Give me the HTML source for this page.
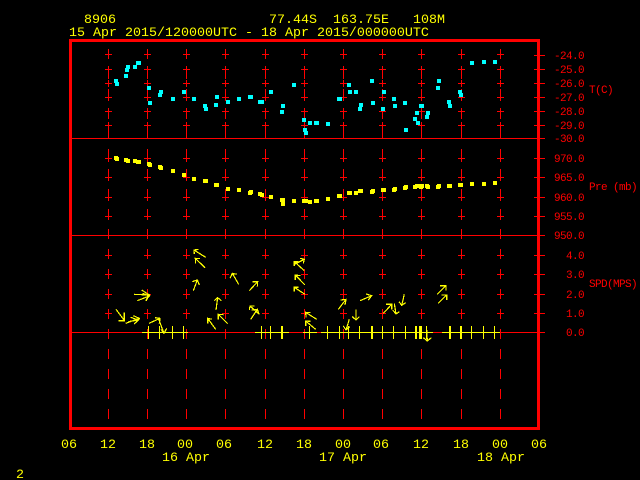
<!DOCTYPE html>
<html><head><meta charset="utf-8"><style>
html,body{margin:0;padding:0;background:#000;width:640px;height:480px;overflow:hidden}
svg{display:block}
text{font-family:"Liberation Mono",monospace;white-space:pre}
.y{fill:#ff0;font-size:13.33px}
.r{fill:#f00;font-size:11px;letter-spacing:-.6px}
</style></head><body>
<svg width="640" height="480" viewBox="0 0 640 480" xmlns="http://www.w3.org/2000/svg">
<rect width="640" height="480" fill="#000"/>
<defs>
<g id="c" fill="none" stroke="#f00" stroke-width="1" shape-rendering="crispEdges">
<path d="M.5 49V59M.5 69V79M.5 89V99M.5 109V119M.5 129V139M.5 149V159M.5 169V179M.5 189V199M.5 209V219M.5 229V239M.5 249V259M.5 269V279M.5 289V299M.5 309V319M.5 329V339M.5 349V359M.5 369V379M.5 389V399M.5 409V419"/>
<path d="M-3 54.5H4M-3 69.5H4M-3 83.5H4M-3 97.5H4M-3 111.5H4M-3 125.5H4M-3 158.5H4M-3 177.5H4M-3 197.5H4M-3 216.5H4M-3 255.5H4M-3 274.5H4M-3 294.5H4M-3 313.5H4"/>
<path d="M.5 51V58M.5 66V73M.5 80V87M.5 94V101M.5 108V115M.5 122V129M.5 155V162M.5 174V181M.5 194V201M.5 213V220M.5 252V259M.5 271V278M.5 291V298M.5 310V317"/>
</g>
</defs>
<use href="#c" x="108"/><use href="#c" x="147"/><use href="#c" x="186"/><use href="#c" x="225"/><use href="#c" x="265"/><use href="#c" x="304"/><use href="#c" x="343"/><use href="#c" x="382"/><use href="#c" x="421"/><use href="#c" x="461"/><use href="#c" x="500"/>
<g fill="none" stroke="#f00" shape-rendering="crispEdges">
<path d="M72 138.5H545M72 235.5H545M72 332.5H545" stroke-width="1"/>
<path d="M534 55.5H545M534 69.5H545M534 83.5H545M534 97.5H545M534 111.5H545M534 125.5H545M534 158.5H545M534 177.5H545M534 197.5H545M534 216.5H545M534 255.5H545M534 274.5H545M534 294.5H545M534 313.5H545"/>
<rect x="70.5" y="40.5" width="468" height="388" stroke-width="3"/>
</g>

<!-- cyan -->
<path fill="#0ff" shape-rendering="crispEdges" d="M114 79h4v4h-4zM115 82h4v4h-4zM124 74h4v4h-4zM125 68h4v4h-4zM126 65h4v4h-4zM133 65h4v4h-4zM136 61h5v4h-5zM147 86h4v4h-4zM148 101h4v4h-4zM158 93h4v4h-4zM159 90h4v4h-4zM171 97h4v4h-4zM182 90h4v4h-4zM192 97h4v4h-4zM203 104h4v4h-4zM204 107h4v4h-4zM214 103h4v4h-4zM215 95h4v4h-4zM226 100h4v4h-4zM237 97h4v4h-4zM248 95h5v4h-5zM258 100h6v4h-6zM269 90h4v4h-4zM280 110h4v4h-4zM281 104h4v4h-4zM292 83h4v4h-4zM302 118h4v4h-4zM303 128h4v4h-4zM304 131h4v4h-4zM308 121h4v4h-4zM314 121h5v4h-5zM326 122h4v4h-4zM337 97h5v4h-5zM347 83h4v4h-4zM348 90h4v4h-4zM354 90h4v4h-4zM358 107h4v4h-4zM359 103h4v4h-4zM370 79h4v4h-4zM371 101h4v4h-4zM381 107h4v4h-4zM382 90h4v4h-4zM392 97h4v4h-4zM393 104h4v4h-4zM403 101h4v4h-4zM404 128h4v4h-4zM413 117h4v4h-4zM415 111h4v4h-4zM416 121h4v4h-4zM419 104h5v4h-5zM425 115h4v4h-4zM426 111h4v4h-4zM436 86h4v4h-4zM437 79h4v4h-4zM447 100h4v4h-4zM448 104h4v4h-4zM458 90h4v4h-4zM459 93h4v4h-4zM470 61h4v4h-4zM482 60h4v4h-4zM493 60h4v4h-4z"/>

<!-- yellow pressure -->
<path fill="#ff0" shape-rendering="crispEdges" d="M114 156h4v4h-4zM115 157h4v4h-4zM124 158h4v4h-4zM126 159h4v4h-4zM133 159h4v4h-4zM136 160h5v4h-5zM147 162h4v4h-4zM148 163h4v4h-4zM158 165h4v4h-4zM159 166h4v4h-4zM171 169h4v4h-4zM182 173h4v4h-4zM192 177h4v4h-4zM203 179h5v4h-5zM214 183h5v4h-5zM226 187h4v4h-4zM237 188h4v4h-4zM248 191h4v4h-4zM249 190h4v4h-4zM258 192h4v4h-4zM260 193h4v4h-4zM269 195h4v4h-4zM280 198h5v4h-5zM281 202h4v4h-4zM292 199h4v4h-4zM302 199h6v4h-6zM308 200h4v4h-4zM314 199h5v4h-5zM326 197h4v4h-4zM337 194h5v4h-5zM347 191h5v4h-5zM354 191h4v4h-4zM358 189h5v4h-5zM370 190h4v4h-4zM371 189h4v4h-4zM381 188h5v4h-5zM392 188h4v4h-4zM393 187h4v4h-4zM403 186h4v4h-4zM404 185h4v4h-4zM413 185h4v4h-4zM415 184h6v4h-6zM419 185h4v4h-4zM420 184h4v4h-4zM425 184h4v4h-4zM426 185h4v4h-4zM436 185h4v4h-4zM437 184h4v4h-4zM447 184h5v4h-5zM458 183h5v4h-5zM470 182h4v4h-4zM482 182h4v4h-4zM493 181h4v4h-4z"/>

<!-- wind baseline -->
<g fill="#ff0" shape-rendering="crispEdges">
<path d="M142 332h46v1h-46zM255 332h34v1h-34zM303 332h14v1h-14zM321 332h112v1H321zM442 332h58v1h-58z"/>
<path d="M148 326h1v13h-1zM159 326h1v13h-1zM172 326h1v13h-1zM183 326h1v13h-1zM261 326h1v13h-1zM270 326h1v13h-1zM281 326h2v13h-2zM309 326h1v13h-1zM327 326h1v13h-1zM339 326h1v13h-1zM348 326h1v13h-1zM359 326h1v13h-1zM371 326h2v13h-2zM382 326h1v13h-1zM393 326h1v13h-1zM405 326h1v13h-1zM415 326h2v13h-2zM419 326h3v13h-3zM426 326h1v13h-1zM449 326h2v13h-2zM460 326h2v13h-2zM471 326h1v13h-1zM483 326h1v13h-1zM494 326h1v13h-1z"/>
</g>

<!-- wind arrows -->
<g fill="none" stroke="#ff0" stroke-width="3.6" shape-rendering="crispEdges" transform="translate(60 230) scale(.33333)">
<path d="M168 238L192 270M175 272L193 272L193 248"/>
<path d="M197 280L238 265M220 257L238 265L226 280M205 275L235 270M212 262L235 270L222 282"/>
<path d="M222 193L268 195M245 180L268 195L258 213M232 212L268 198M248 190L268 198L258 210"/>
<path d="M267 280L300 265M285 263L300 265L298 280"/>
<path d="M295 265L312 310M303 298L312 310L320 295"/>
<path d="M400 182L412 150M397 155L412 150L418 165"/>
<path d="M437 82L402 60M403 72L402 60L416 58"/>
<path d="M435 113L406 85M407 100L406 85L420 86"/>
<path d="M468 240L473 203M463 212L473 203L484 212"/>
<path d="M467 298L443 265M443 280L443 265L455 268"/>
<path d="M503 281L475 253M475 268L475 253L490 254"/>
<path d="M536 163L517 130M510 145L517 130L530 133"/>
<path d="M568 182L593 155M578 155L593 155L592 170"/>
<path d="M598 253L570 228M568 240L570 228L583 228"/>
<path d="M572 268L592 238M575 240L592 238L597 252"/>
<path d="M733 122L703 95M703 108L703 95L716 95"/>
<path d="M703 103L733 88M720 85L733 88L730 100"/>
<path d="M735 165L706 135M706 150L706 135L722 137"/>
<path d="M735 193L703 172M703 185L703 172L716 172"/>
<path d="M770 268L737 247M738 262L737 247L752 248"/>
<path d="M767 298L737 273M737 288L737 273L752 274"/>
</g>
<g fill="none" stroke="#ff0" stroke-width="3.6" shape-rendering="crispEdges" transform="translate(300 230) scale(.33333)">
<path d="M115 238L138 208M122 210L138 208L135 225"/>
<path d="M180 212L215 197M198 192L215 197L205 210"/>
<path d="M168 238L168 270M157 260L168 270L178 260"/>
<path d="M148 268L138 300M130 288L138 300L150 290"/>
<path d="M250 250L275 223M258 223L275 223L275 238"/>
<path d="M283 220L288 252M278 240L288 252L298 245"/>
<path d="M313 193L305 226M297 215L305 226L317 218"/>
<path d="M412 193L438 167M420 167L438 167L438 182"/>
<path d="M415 220L440 195M424 195L440 195L440 210"/>
<path d="M380 300L382 333M370 323L382 333L394 323"/>
</g>

<!-- header -->
<text class="y" x="84" y="23">8906</text>
<text class="y" x="269" y="23">77.44S</text>
<text class="y" x="333" y="23">163.75E</text>
<text class="y" x="413" y="23">108M</text>
<text class="y" x="69" y="36">15 Apr 2015/120000UTC - 18 Apr 2015/000000UTC</text>

<!-- right labels -->
<text class="r" x="554" y="59">-24.0</text>
<text class="r" x="554" y="73">-25.0</text>
<text class="r" x="554" y="87">-26.0</text>
<text class="r" x="554" y="101">-27.0</text>
<text class="r" x="554" y="115">-28.0</text>
<text class="r" x="554" y="129">-29.0</text>
<text class="r" x="554" y="142">-30.0</text>
<text class="r" x="554" y="162">970.0</text>
<text class="r" x="554" y="181">965.0</text>
<text class="r" x="554" y="201">960.0</text>
<text class="r" x="554" y="220">955.0</text>
<text class="r" x="554" y="239">950.0</text>
<text class="r" x="566" y="259">4.0</text>
<text class="r" x="566" y="278">3.0</text>
<text class="r" x="566" y="298">2.0</text>
<text class="r" x="566" y="317">1.0</text>
<text class="r" x="566" y="336">0.0</text>
<text class="r" x="589" y="93">T(C)</text>
<text class="r" x="589" y="190">Pre (mb)</text>
<text class="r" x="589" y="287">SPD(MPS)</text>

<!-- bottom labels -->
<text class="y" x="61" y="448">06</text>
<text class="y" x="100" y="448">12</text>
<text class="y" x="139" y="448">18</text>
<text class="y" x="177" y="448">00</text>
<text class="y" x="216" y="448">06</text>
<text class="y" x="257" y="448">12</text>
<text class="y" x="296" y="448">18</text>
<text class="y" x="335" y="448">00</text>
<text class="y" x="373" y="448">06</text>
<text class="y" x="413" y="448">12</text>
<text class="y" x="453" y="448">18</text>
<text class="y" x="492" y="448">00</text>
<text class="y" x="531" y="448">06</text>
<text class="y" x="162" y="461">16 Apr</text>
<text class="y" x="319" y="461">17 Apr</text>
<text class="y" x="477" y="461">18 Apr</text>
<text class="y" x="16" y="478">2</text>
</svg>
</body></html>
